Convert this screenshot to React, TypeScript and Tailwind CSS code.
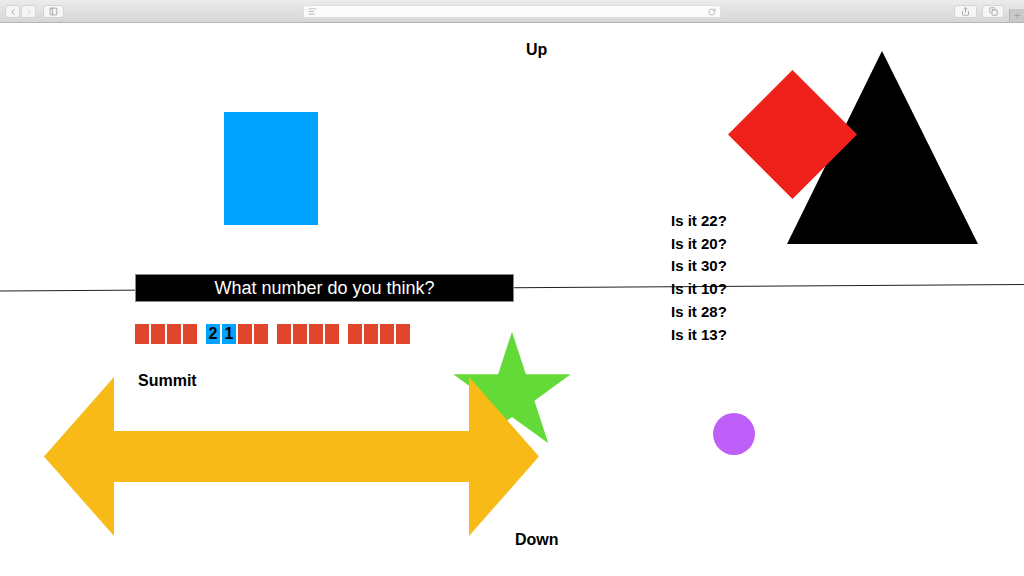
import { AlignLeft, ChevronLeft, ChevronRight, Copy, PanelLeft, Plus, RotateCw, Share } from "lucide-react";

const guesses = ["Is it 22?", "Is it 20?", "Is it 30?", "Is it 10?", "Is it 28?", "Is it 13?"];

// each group is four cells; a digit marks a cell that is already filled in
const groups: (string | null)[][] = [
  [null, null, null, null],
  ["2", "1", null, null],
  [null, null, null, null],
  [null, null, null, null],
];

function Toolbar() {
  return (
    <div className="h-[23px] flex items-start pl-[5px] pt-[5px] border-b border-[#b4b4b4] bg-gradient-to-b from-[#ececec] to-[#d6d6d6]">
      <div className="flex gap-px">
        <button className="h-[13px] w-[15px] rounded-[3px] bg-[#f6f6f6] border border-[#d4d4d4] flex items-center justify-center text-[#7d7d7d]">
          <ChevronLeft size={10} strokeWidth={1.6} />
        </button>
        <button className="h-[13px] w-[15px] rounded-[3px] bg-[#f6f6f6] border border-[#d4d4d4] flex items-center justify-center text-[#c2c2c2]">
          <ChevronRight size={10} strokeWidth={1.6} />
        </button>
      </div>
      <button className="ml-[7px] h-[13px] w-[21px] rounded-[3px] bg-[#f6f6f6] border border-[#d4d4d4] flex items-center justify-center text-[#7d7d7d]">
        <PanelLeft size={9} strokeWidth={1.6} />
      </button>
      <div className="ml-[239px] h-[13px] w-[418px] rounded-[3px] bg-[#fbfbfb] border border-[#dedede] flex items-center justify-between px-[4px] text-[#9a9a9a]">
        <AlignLeft size={9} strokeWidth={1.8} />
        <RotateCw size={8} strokeWidth={1.8} />
      </div>
      <button className="ml-[233px] h-[13px] w-[23px] rounded-[3px] bg-[#f6f6f6] border border-[#d4d4d4] flex items-center justify-center text-[#7d7d7d]">
        <Share size={9} strokeWidth={1.6} />
      </button>
      <button className="ml-[5px] h-[13px] w-[22px] rounded-[3px] bg-[#f6f6f6] border border-[#d4d4d4] flex items-center justify-center text-[#7d7d7d]">
        <Copy size={9} strokeWidth={1.6} />
      </button>
      <div className="ml-[5px] mt-[4px] h-[13px] w-[15px] bg-[#c9c9c9] border-l border-[#b4b4b4] flex items-center justify-center text-[#8a8a8a]">
        <Plus size={9} strokeWidth={1.4} />
      </div>
    </div>
  );
}

export default function App() {
  return (
    <div className="w-[1024px] h-[576px] bg-white overflow-hidden font-['Liberation_Sans',Arial,sans-serif]">
      <Toolbar />

      {/* slide canvas: shapes sit where the author dropped them */}
      <div className="relative h-[553px]">
        <svg className="absolute left-0 top-[255px]" width="1024" height="20">
          <line x1="0" y1="13" x2="1024" y2="6.5" stroke="#1f1f1f" strokeWidth="1" />
        </svg>

        <p className="absolute left-[526px] top-[17px] text-[16px] leading-[20px] font-bold text-black">Up</p>

        <div className="absolute left-[224px] top-[89px] w-[94px] h-[113px] bg-[#00a3ff]" />

        <svg className="absolute left-[787px] top-[28px]" width="191" height="193">
          <polygon points="95,0 0,193 191,193" fill="#000000" />
        </svg>
        <svg className="absolute left-[728px] top-[47px]" width="129" height="129">
          <polygon points="64.5,0 129,64.5 64.5,129 0,64.5" fill="#ef221b" />
        </svg>

        <div className="absolute left-[671px] top-[187px] flex flex-col">
          {guesses.map((g) => (
            <p key={g} className="text-[15px] leading-[22.7px] font-bold text-black">
              {g}
            </p>
          ))}
        </div>

        <div className="absolute left-[135px] top-[251px] flex flex-col gap-[22px]">
          <div className="w-[379px] h-[28px] bg-black border border-[#8a8a8a] flex items-center justify-center">
            <span className="text-[18px] text-white">What number do you think?</span>
          </div>
          <div className="flex gap-[9px]">
            {groups.map((cells, gi) => (
              <div key={gi} className="flex gap-[2px]">
                {cells.map((d, ci) =>
                  d ? (
                    <div
                      key={ci}
                      className="w-[14px] h-[20px] bg-[#00a3ff] flex items-center justify-center text-[16px] leading-[20px] font-bold text-black"
                    >
                      {d}
                    </div>
                  ) : (
                    <div key={ci} className="w-[14px] h-[20px] bg-[#e0462c]" />
                  )
                )}
              </div>
            ))}
          </div>
        </div>

        <svg className="absolute left-[450px] top-[308px]" width="124" height="124">
          <polygon
            points="62,0.7 75.87,43.31 120.68,43.33 84.44,69.69 98.27,112.32 62,86 25.73,112.32 39.56,69.69 3.32,43.33 48.13,43.31"
            fill="#63da38"
          />
        </svg>

        <p className="absolute left-[138px] top-[348px] text-[16px] leading-[20px] font-bold text-black">Summit</p>

        <svg className="absolute left-[44px] top-[354px]" width="495" height="159">
          <polygon
            points="0,79.5 70,0 70,54 425,54 425,0 495,79.5 425,159 425,105 70,105 70,159"
            fill="#f8ba17"
          />
        </svg>

        <div className="absolute left-[713px] top-[390px] w-[42px] h-[42px] rounded-full bg-[#bf5ff9]" />

        <p className="absolute left-[515px] top-[507px] text-[16px] leading-[20px] font-bold text-black">Down</p>
      </div>
    </div>
  );
}
